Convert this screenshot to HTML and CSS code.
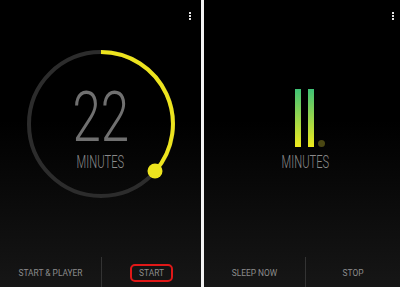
FILE: index.html
```html
<!DOCTYPE html>
<html>
<head>
<meta charset="utf-8">
<link rel="stylesheet" href="styles.css">
</head>
<body>
<div class="screens">
  <section class="panel panel-left">
    <div class="topbar"><span class="menu"><i></i><i></i><i></i></span></div>
    <div class="dial">
      <svg class="ring" width="152" height="152" viewBox="0 0 152 152">
        <circle cx="76" cy="76" r="72" fill="none" stroke="#2c2c2c" stroke-width="4"/>
        <path d="M76 4 A72 72 0 0 1 130.3 123.2" fill="none" stroke="#ede41e" stroke-width="4"/>
        <circle cx="130" cy="123" r="7.5" fill="#ede41e"/>
      </svg>
      <div class="readout">
        <span class="big">22</span>
        <span class="unit">MINUTES</span>
      </div>
    </div>
    <div class="actions">
      <button class="act">START &amp; PLAYER</button>
      <span class="sep"></span>
      <button class="act"><span class="hl">START</span></button>
    </div>
  </section>
  <div class="divider"></div>
  <section class="panel panel-right">
    <div class="topbar"><span class="menu"><i></i><i></i><i></i></span></div>
    <div class="counter">
      <div class="marks">
        <span class="bar"></span>
        <span class="bar"></span>
        <span class="dot"></span>
      </div>
      <span class="unit">MINUTES</span>
    </div>
    <div class="actions">
      <button class="act">SLEEP NOW</button>
      <span class="sep"></span>
      <button class="act">STOP</button>
    </div>
  </section>
</div>
</body>
</html>
```

FILE: styles.css
```css
html, body {
  margin: 0;
  padding: 0;
  background: #000;
}
body {
  font-family: Roboto, "Liberation Sans", sans-serif;
}
.screens {
  display: flex;
  width: 400px;
  height: 287px;
  overflow: hidden;
}
.panel {
  display: flex;
  flex-direction: column;
  height: 287px;
  background: linear-gradient(to bottom, #000 0%, #000 42%, #161616 100%);
}
.panel-left {
  width: 201px;
}
.panel-right {
  flex: 1;
}
.divider {
  width: 3px;
  background: #f2f2f2;
}
.topbar {
  height: 32px;
  display: flex;
  justify-content: flex-end;
  box-sizing: border-box;
  padding-top: 12px;
}
.panel-left .topbar { padding-right: 10px; }
.panel-right .topbar { padding-right: 6px; }
.menu {
  display: flex;
  flex-direction: column;
  gap: 1px;
}
.menu i {
  display: block;
  width: 2px;
  height: 2px;
  background: #e0e0e0;
}
.dial {
  display: grid;
  justify-content: center;
  margin-top: 16px;
}
.ring, .readout {
  grid-area: 1 / 1;
}
.readout {
  display: flex;
  flex-direction: column;
  align-items: center;
  padding-top: 34px;
}
.big {
  display: block;
  font-size: 70px;
  line-height: 70px;
  font-weight: 300;
  color: #707070;
  transform: scaleX(0.73);
}
.unit {
  display: block;
  font-size: 18px;
  line-height: 18px;
  font-weight: 300;
  color: #8a8a8a;
  transform: scaleX(0.62);
  margin-top: 1px;
}
.counter {
  display: flex;
  flex-direction: column;
  align-items: center;
  padding-left: 6px;
  margin-top: 57px;
}
.marks {
  display: flex;
  align-items: flex-end;
  margin-left: 10px;
}
.bar {
  width: 6px;
  height: 58px;
  background: linear-gradient(to bottom, #3fc276 0%, #98d64c 50%, #f0ea1c 100%);
}
.bar + .bar {
  margin-left: 7px;
}
.dot {
  width: 7px;
  height: 7px;
  border-radius: 50%;
  background: #4a4713;
  margin-left: 4px;
}
.counter .unit {
  margin-top: 6px;
}
.actions {
  margin-top: auto;
  height: 30px;
  display: grid;
  grid-template-columns: 101px 1px 1fr;
  align-items: center;
}
.sep {
  height: 30px;
  background: #333;
}
.act {
  background: none;
  border: none;
  padding: 1px 0 0;
  margin: 0;
  font-family: Roboto, "Liberation Sans", sans-serif;
  font-size: 8.4px;
  color: #8c8c8c;
  text-align: center;
  line-height: 14px;
}
.hl {
  display: inline-block;
  box-sizing: border-box;
  width: 43px;
  height: 18px;
  line-height: 14px;
  border: 2px solid #e01818;
  border-radius: 5px;
  vertical-align: middle;
}
```
